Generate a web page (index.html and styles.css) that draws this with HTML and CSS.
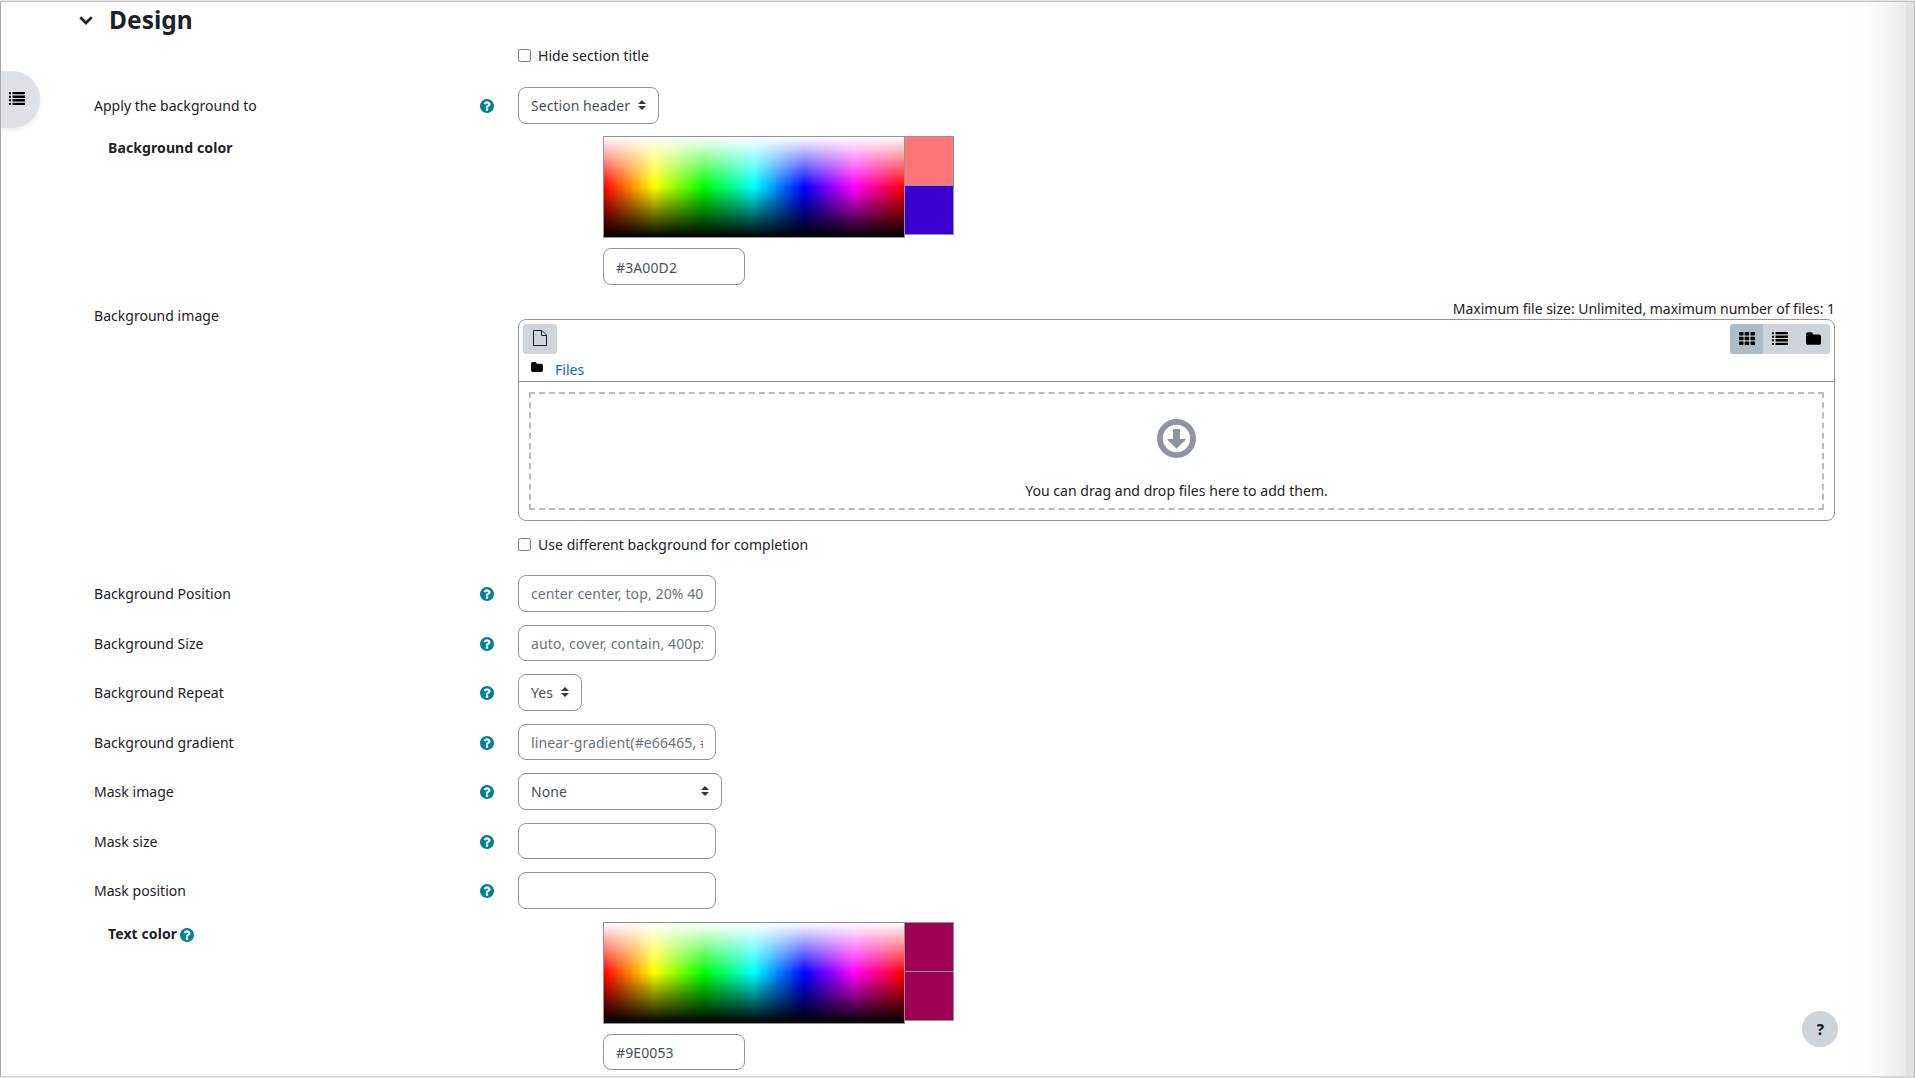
FILE: index.html
```html
<!DOCTYPE html>
<html lang="en">
<head>
<meta charset="utf-8">
<title>Design</title>
<link rel="stylesheet" href="styles.css">
</head>
<body>
<svg class="defs" width="0" height="0" aria-hidden="true">
  <symbol id="help" viewBox="128 128 1536 1536"><path d="M1024 1376v-192q0-14-9-23t-23-9h-192q-14 0-23 9t-9 23v192q0 14 9 23t23 9h192q14 0 23-9t9-23zm256-672q0-88-55.5-163t-138.500-116-170-41q-243 0-371 213-15 24 8 42l132 100q7 6 19 6 16 0 25-12 53-68 86-92 34-24 86-24 48 0 85.500 26t37.500 59q0 38-20 61t-68 45q-63 28-115.500 86.500t-52.500 125.500v36q0 14 9 23t23 9h192q14 0 23-9t9-23q0-19 21.500-49.500t54.500-49.500q32-18 49-28.500t46-35 44.500-48 28-60.500 12.500-81zm384 192q0 209-103 385.500t-279.500 279.500-385.500 103-385.500-103-279.500-279.500-103-385.500 103-385.500 279.500-279.500 385.500-103 385.500 103 279.500 279.500 103 385.500z"/></symbol>
  <symbol id="list" viewBox="0 0 16 13"><path d="M0 .2h2v2H0zM0 3.800h2v2H0zM0 7.300h2v2H0zM0 10.900h2v2H0zM3.500 0H16v2.300H3.500zM3.500 3.600H16v2.300H3.500zM3.500 7.100H16v2.300H3.500zM3.500 10.700H16V13H3.500z"/></symbol>
  <symbol id="grid" viewBox="0 0 16 13"><path d="M.6 0h3.300q.6 0 .6.600v2.200q0 .6-.6.600H.6Q0 3.400 0 2.800V.6Q0 0 .6 0zM6.300 0h3.300q.6 0 .6.600v2.200q0 .6-.6.600H6.300q-.6 0-.6-.6V.6q0-.6.600-.6zM12.100 0h3.300q.6 0 .6.600v2.200q0 .6-.6.600h-3.300q-.6 0-.6-.6V.6q0-.6.600-.6zM.6 4.800h3.300q.6 0 .6.600v2.200q0 .6-.6.600H.6q-.6 0-.6-.6V5.400q0-.6.600-.6zM6.300 4.800h3.300q.6 0 .6.600v2.200q0 .6-.6.600H6.300q-.6 0-.6-.6V5.400q0-.6.600-.6zM12.100 4.800h3.300q.6 0 .6.600v2.200q0 .6-.6.600h-3.300q-.6 0-.6-.6V5.400q0-.6.600-.6zM.6 9.600h3.300q.6 0 .6.600v2.200q0 .6-.6.600H.6q-.6 0-.6-.6v-2.200q0-.6.600-.6zM6.300 9.600h3.300q.6 0 .6.600v2.200q0 .6-.6.600H6.300q-.6 0-.6-.6v-2.200q0-.6.600-.6zM12.100 9.600h3.300q.6 0 .6.600v2.200q0 .6-.6.600h-3.300q-.6 0-.6-.6v-2.200q0-.6.600-.6z"/></symbol>
  <symbol id="folder" viewBox="64 128 1664 1408"><path d="M1728 608v704q0 92-66 158t-158 66h-1216q-92 0-158-66t-66-158v-960q0-92 66-158t158-66h320q92 0 158 66t66 158v32h672q92 0 158 66t66 158z"/></symbol>
</svg>

<div class="page">
  <button class="drawer" aria-label="Open course index"><svg width="16" height="13"><use href="#list"/></svg></button>

  <form class="form">
    <h3 class="heading">
      <svg width="14" height="9" viewBox="0 0 14 9"><path d="M1.300 1.300 7 7l5.700-5.700" fill="none" stroke="#1d2125" stroke-width="2.700"/></svg>
      Design
    </h3>

    <div class="row check-row"><label class="check"><input type="checkbox">Hide section title</label></div>

    <div class="row select-row">
      <span class="label">Apply the background to</span><svg class="help"><use href="#help"/></svg>
      <select class="control w-header"><option>Section header</option></select>
    </div>

    <div class="color-row first">
      <span class="color-label">Background color</span>
      <div class="picker">
        <div class="swatches"><div class="spectrum"></div><div class="previews"><i class="preview coral"></i><i class="preview indigo"></i></div></div>
        <input class="control w-color" type="text" value="#3A00D2">
      </div>
    </div>

    <div class="row file-row">
      <span class="label">Background image</span>
      <div class="files">
        <div class="limits">Maximum file size: Unlimited, maximum number of files: 1</div>
        <div class="manager">
          <div class="bar">
            <button type="button" class="tool add" aria-label="Add"><svg width="14" height="16" viewBox="0 0 14 16"><path d="M.5.5h8.500l4.500 4.500v10.500H.5zM8.500.8v4.700h4.700" fill="none" stroke="#1d2125" stroke-width="1"/></svg></button>
            <div class="views">
              <button type="button" class="tool active" aria-label="Icons"><svg width="16" height="13"><use href="#grid"/></svg></button>
              <button type="button" class="tool" aria-label="List"><svg width="16" height="13"><use href="#list"/></svg></button>
              <button type="button" class="tool" aria-label="Tree"><svg width="15" height="13"><use href="#folder"/></svg></button>
            </div>
          </div>
          <div class="path"><svg width="12" height="10"><use href="#folder"/></svg><a>Files</a></div>
          <div class="content">
            <div class="drop">
              <svg width="39" height="39" viewBox="0 0 39 39" fill="#8f959e"><circle cx="19.500" cy="19.500" r="16.600" fill="none" stroke="#8f959e" stroke-width="5.800"/><path d="M16.600 9.900h5.800q.6 0 .6.600V20h5.200q.9 0 .4.700l-8.600 8.600q-.5.500-1 0l-8.600-8.600q-.5-.7.400-.7H16v-9.500q0-.6.600-.6z"/></svg>
              <span>You can drag and drop files here to add them.</span>
            </div>
          </div>
        </div>
      </div>
    </div>

    <div class="row check-row second"><label class="check"><input type="checkbox">Use different background for completion</label></div>

    <div class="row"><span class="label">Background Position</span><svg class="help"><use href="#help"/></svg><input class="control" type="text" placeholder="center center, top, 20% 40%"></div>
    <div class="row"><span class="label">Background Size</span><svg class="help"><use href="#help"/></svg><input class="control" type="text" placeholder="auto, cover, contain, 400px"></div>
    <div class="row"><span class="label">Background Repeat</span><svg class="help"><use href="#help"/></svg><select class="control w-yes"><option>Yes</option></select></div>
    <div class="row"><span class="label">Background gradient</span><svg class="help"><use href="#help"/></svg><input class="control" type="text" placeholder="linear-gradient(#e66465, #9198e5)"></div>
    <div class="row"><span class="label">Mask image</span><svg class="help"><use href="#help"/></svg><select class="control w-mask"><option>None</option></select></div>
    <div class="row"><span class="label">Mask size</span><svg class="help"><use href="#help"/></svg><input class="control" type="text"></div>
    <div class="row"><span class="label">Mask position</span><svg class="help"><use href="#help"/></svg><input class="control" type="text"></div>

    <div class="color-row">
      <span class="color-label">Text color<svg class="help"><use href="#help"/></svg></span>
      <div class="picker">
        <div class="swatches"><div class="spectrum"></div><div class="previews"><i class="preview wine"></i><i class="preview wine"></i></div></div>
        <input class="control w-color" type="text" value="#9E0053">
      </div>
    </div>
  </form>

  <div class="edge"></div>
  <button class="support" aria-label="Help">?</button>
</div>
</body>
</html>
```
FILE: styles.css
```css
* { box-sizing: border-box; }

body {
  margin: 0;
  border-top: 1px solid #e4e4e4;
  background: #fff;
  color: #1d2125;
  font: 14px/22px "Noto Sans", "Open Sans", sans-serif;
  letter-spacing: .04px;
}

button { padding: 0; border: 0; font: inherit; color: inherit; }
svg { display: block; flex: none; }
.defs { position: absolute; }

.page {
  position: relative;
  height: 1077px;
  overflow: hidden;
  border-top: 1px solid #c4c4c4;
  border-left: 1px solid #a9a9a9;
  border-right: 1px solid #b3b3b3;
  border-bottom: 2px solid #d9d9d9;
}

.form { padding: 0 79px 0 93px; }

.heading {
  display: flex;
  align-items: center;
  gap: 16px;
  height: 38px;
  margin: 0 0 0 -15px;
  padding-bottom: 3px;
  font-size: 24.500px;
  line-height: 34px;
  font-weight: 700;
}
.heading svg { margin-top: 2px; }

.row {
  display: grid;
  grid-template-columns: 385.500px 38.500px 1fr;
  align-items: center;
  height: 36.500px;
  margin-bottom: 13px;
}
.row > .control, .row > .check { grid-column: 3; }
.row > .label { padding-top: 1.500px; letter-spacing: .03px; }
.select-row { margin-bottom: 12.500px; }
.check-row { height: 31px; margin-bottom: 16px; }
.check-row.second { margin-bottom: 15px; }

.check { display: flex; align-items: center; gap: 7px; }
.check input { width: 13px; height: 13px; margin: 0; }

.help {
  width: 14px;
  height: 14px;
  fill: #008196;
  position: relative;
  top: 1px;
}

.control {
  width: 198px;
  height: 36.500px;
  padding: 1px 12px 0;
  border: 1px solid #8f959e;
  border-radius: 8px;
  background: #fff;
  color: #495057;
  font: inherit;
  letter-spacing: inherit;
}
.control::placeholder { color: #6a737b; letter-spacing: .11px; }
select.control {
  appearance: none;
  background: url("data:image/svg+xml,%3csvg xmlns='http://www.w3.org/2000/svg' viewBox='0 0 4 5'%3e%3cpath fill='%23343a40' d='M2 0L0 2h4zm0 5L0 3h4z'/%3e%3c/svg%3e") no-repeat right 12px center / 8px 10px;
}
.w-header { width: 141px; }
.w-yes { width: 64px; }
.w-mask { width: 204px; }
.w-color { width: 142px; padding-top: 2px; letter-spacing: .12px; }

.color-row { display: grid; grid-template-columns: 509px 1fr; }
.color-row.first { margin-bottom: 11.500px; }
.color-label {
  display: flex;
  height: 24px;
  gap: 2.500px;
  padding-left: 14px;
  align-items: center;
  font-weight: 700;
  letter-spacing: .1px;
}
.picker { display: grid; gap: 10px; }
.swatches { display: flex; }
.spectrum {
  width: 302px;
  height: 102px;
  border: 1px solid #8f959e;
  background:
    linear-gradient(#fff, rgba(255, 255, 255, 0) 50%),
    linear-gradient(rgba(0, 0, 0, 0) 50%, #000),
    linear-gradient(90deg, #f00, #ff0, #0f0, #0ff, #00f, #f0f, #f00);
}
.previews { display: flex; flex-direction: column; }
.preview {
  width: 49px;
  height: 49px;
  border: solid #8f959e;
  border-width: 0 1px 1px 0;
}
.preview:first-child { height: 50px; border-top-width: 1px; }
.coral { background: #ff7575; }
.indigo { background: #3a00d2; }
.wine { background: #9e0053; }

.file-row { height: auto; margin-bottom: 8px; align-items: start; }
.file-row > .label { padding-top: 9px; }
.files { grid-column: 3; }
.limits { height: 23px; line-height: 25px; text-align: right; letter-spacing: -.02px; }
.manager { height: 202px; border: 1px solid #8f959e; border-radius: 8px; }
.bar { display: flex; justify-content: space-between; padding: 4px 4px 0; }
.views { display: flex; border-radius: 3px; overflow: hidden; }
.tool {
  display: grid;
  place-items: center;
  width: 33.300px;
  height: 30px;
  padding-bottom: 2px;
  background: #ced4da;
}
.add { width: 34px; border-radius: 3px; }
.active { background: #afbbc5; }
.path {
  display: flex;
  align-items: center;
  gap: 12px;
  height: 28px;
  padding: 4px 0 0 12px;
  border-bottom: 1px solid #8f959e;
}
.path svg { fill: #000; margin-bottom: 6px; }
.path a { color: #0f6cbf; }
.content { padding: 10px; }
.drop {
  display: flex;
  flex-direction: column;
  align-items: center;
  height: 118px;
  padding-top: 25px;
  gap: 22px;
  border: 2px dashed #bbb;
}

/* Chrome that floats over the form */
.drawer {
  position: absolute;
  top: 69px;
  left: 0;
  width: 39px;
  height: 57px;
  padding: 0 0 2px 8px;
  border-radius: 0 28px 28px 0;
  background: #dee2e6;
  box-shadow: 0 2px 4px rgba(0, 0, 0, .08);
}
.support {
  position: absolute;
  right: 76px;
  bottom: 29px;
  width: 36px;
  height: 36px;
  padding-left: 1px;
  border-radius: 50%;
  background: #ced4da;
  font-weight: 800;
  font-size: 15px;
}
.edge {
  position: absolute;
  inset: 0 0 0 auto;
  width: 68px;
  background:
    linear-gradient(#e0e3e1, #e0e3e1) right / 8px 100% no-repeat,
    linear-gradient(90deg, #fff 0, #fdfdfd 30%, #f7f7f7 55%, #ebebeb 85%, #e8e8e8 100%);
}
```
